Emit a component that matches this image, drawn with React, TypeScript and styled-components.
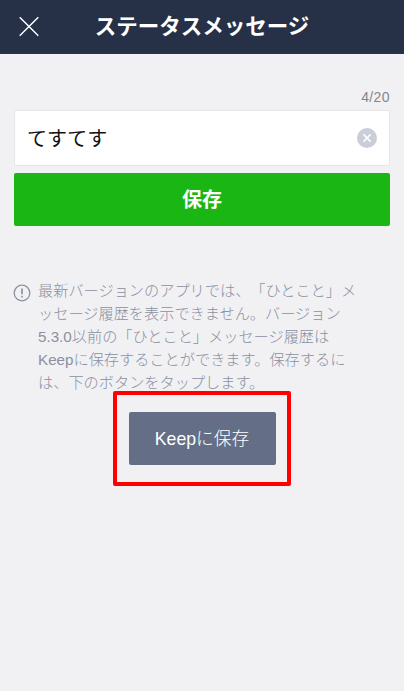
import React from "react";
import styled, { createGlobalStyle } from "styled-components";

const GlobalStyle = createGlobalStyle`
  * { box-sizing: border-box; }
  html, body { margin: 0; background: #fff; }
  body {
    font-family: "Liberation Sans", "Noto Sans CJK JP", sans-serif;
    text-spacing-trim: space-all;
  }
  button { font-family: inherit; padding: 0; border: 0; }
`;

const Screen = styled.main`
  display: flex;
  flex-direction: column;
  width: 404px;
  height: 691px;
  background: #f1f1f4;
  overflow: hidden;
`;

const Header = styled.header`
  display: grid;
  grid-template-columns: 57px 1fr 57px;
  align-items: center;
  height: 54px;
  flex: none;
  background: #263147;
  border-bottom: 1px solid #303442;
`;

const CloseButton = styled.button`
  display: flex;
  justify-content: center;
  background: none;
  color: #fff;
`;

const Title = styled.h1`
  margin: 0;
  text-align: center;
  white-space: nowrap;
  color: #fff;
  font-size: 21.5px;
  line-height: 30px;
  font-weight: 700;
`;

const Form = styled.form`
  display: flex;
  flex-direction: column;
  padding: 34px 14px 0;
`;

const Counter = styled.div`
  height: 22px;
  line-height: 18px;
  text-align: right;
  font-size: 14px;
  letter-spacing: 0.4px;
  color: #85858d;
`;

const Field = styled.div`
  display: flex;
  align-items: center;
  justify-content: space-between;
  height: 56px;
  padding: 0 12px;
  background: #fff;
  border: 1px solid #e6e6e8;
  border-radius: 2px;
  color: #111;
  font-size: 20px;
`;

const FieldValue = styled.span`
  padding-bottom: 2px;
`;

const ClearButton = styled.button`
  display: flex;
  background: none;
`;

const Button = styled.button<{ $tone: "primary" | "muted" }>`
  display: flex;
  align-items: center;
  justify-content: center;
  height: 53px;
  border-radius: 2px;
  color: #fff;
  background: ${(p) => (p.$tone === "primary" ? "#1ab614" : "#646f87")};
  width: ${(p) => (p.$tone === "primary" ? "100%" : "147px")};
  padding-bottom: ${(p) => (p.$tone === "primary" ? "2px" : "3px")};
  font-size: ${(p) => (p.$tone === "primary" ? "20px" : "17.7px")};
  font-weight: ${(p) => (p.$tone === "primary" ? 700 : 300)};
  margin-top: ${(p) => (p.$tone === "primary" ? "7px" : "0")};
`;

const Notice = styled.section`
  display: flex;
  gap: 7px;
  margin: 53px 0 0 13px;
`;

const NoticeIcon = styled.svg`
  flex: none;
  margin-top: 5px;
`;

const NoticeText = styled.p`
  margin: 0;
  color: #8a90a0;
  font-size: 15.2px;
  font-weight: 300;
  line-height: 23px;
  white-space: nowrap;
`;

const NoticeLine = styled.span`
  display: block;
`;

const Highlight = styled.div`
  display: flex;
  align-items: center;
  justify-content: center;
  align-self: flex-start;
  width: 178px;
  height: 95px;
  margin: -3px 0 0 113px;
  border: 4px solid #f00;
  border-radius: 2px;
`;

const noticeLines = [
  "最新バージョンのアプリでは、「ひとこと」メ",
  "ッセージ履歴を表示できません。バージョン",
  "5.3.0以前の「ひとこと」メッセージ履歴は",
  "Keepに保存することができます。保存するに",
  "は、下のボタンをタップします。",
];

export default function App() {
  return (
    <>
      <GlobalStyle />
      <Screen lang="ja">
        <Header>
          <CloseButton type="button" aria-label="閉じる">
            <svg width="20" height="20" viewBox="0 0 20 20" fill="none" stroke="currentColor" strokeWidth="1.4">
              <path d="M.7.2 19.3 18.8M19.3.2.7 18.8" />
            </svg>
          </CloseButton>
          <Title>ステータスメッセージ</Title>
        </Header>
        <Form>
          <Counter>4/20</Counter>
          <Field>
            <FieldValue>てすてす</FieldValue>
            <ClearButton type="button" aria-label="クリア">
              <svg width="20" height="20" viewBox="0 0 20 20">
                <circle cx="10" cy="10" r="10" fill="#cbced8" />
                <path d="m6.4 6.4 7.2 7.2m0-7.2-7.2 7.2" stroke="#fff" strokeWidth="1.5" />
              </svg>
            </ClearButton>
          </Field>
          <Button type="button" $tone="primary">保存</Button>
        </Form>
        <Notice>
          <NoticeIcon width="18" height="18" viewBox="0 0 18 18" fill="none" stroke="#8d93a2">
            <circle cx="9" cy="9" r="7.8" strokeWidth="1.3" />
            <path d="M9 4.5v5.8M9 11.7v1.8" strokeWidth="1.7" />
          </NoticeIcon>
          <NoticeText>
            {noticeLines.map((line) => (
              <NoticeLine key={line}>{line}</NoticeLine>
            ))}
          </NoticeText>
        </Notice>
        <Highlight>
          <Button type="button" $tone="muted">Keepに保存</Button>
        </Highlight>
      </Screen>
    </>
  );
}
